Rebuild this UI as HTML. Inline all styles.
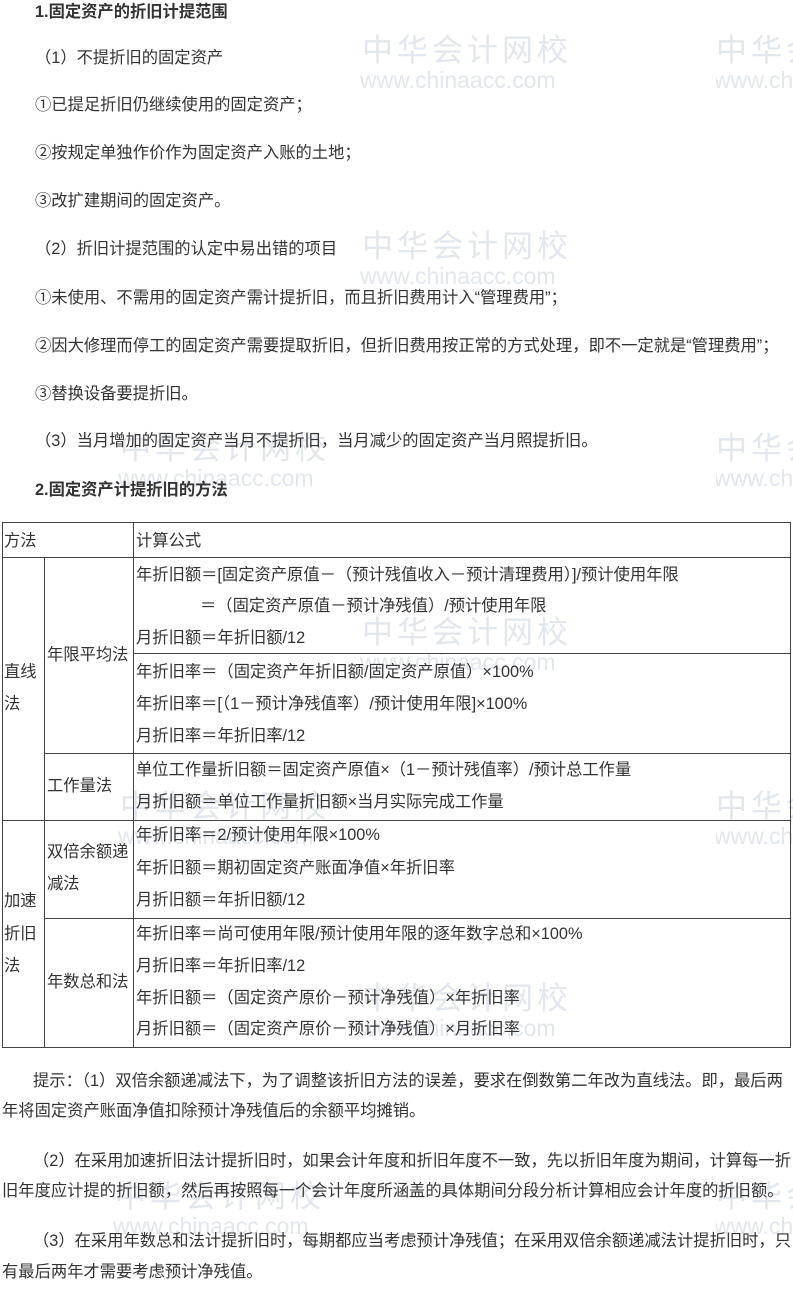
<!DOCTYPE html><html><head><meta charset="utf-8"><style>
html,body{margin:0;width:793px;height:1300px;overflow:hidden}
body{background:#fff;font-family:"Liberation Sans","Noto Sans CJK SC",sans-serif;color:#333;font-size:16.3px}
#w{position:relative;width:793px;height:1300px;overflow:hidden}
.t{position:absolute;white-space:nowrap;line-height:18px;z-index:1}
.b{font-weight:bold}
.wm{position:absolute;color:#e2e6ee;white-space:nowrap;z-index:0}
.wm .c{font-size:31px;letter-spacing:4px;line-height:34px}
.wm .u{font-size:23px;line-height:24px;margin-left:-2px}
.wr{width:77px;overflow:hidden}
.h{position:absolute;background:#444;height:1px}
.v{position:absolute;background:#444;width:1px}
</style></head><body><div id="w">
<div class="wm" style="left:362px;top:34px"><div class="c">中华会计网校</div><div class="u">www.chinaacc.com</div></div>
<div class="wm" style="left:362px;top:230px"><div class="c">中华会计网校</div><div class="u">www.chinaacc.com</div></div>
<div class="wm" style="left:362px;top:616px"><div class="c">中华会计网校</div><div class="u">www.chinaacc.com</div></div>
<div class="wm" style="left:362px;top:982px"><div class="c">中华会计网校</div><div class="u">www.chinaacc.com</div></div>
<div class="wm" style="left:120px;top:432px"><div class="c">中华会计网校</div><div class="u">www.chinaacc.com</div></div>
<div class="wm" style="left:120px;top:790px"><div class="c">中华会计网校</div><div class="u">www.chinaacc.com</div></div>
<div class="wm" style="left:115px;top:1180px"><div class="c">中华会计网校</div><div class="u">www.chinaacc.com</div></div>
<div class="wm wr" style="left:716px;top:34px"><div class="c">中华会计网校</div><div class="u">www.chinaacc.com</div></div>
<div class="wm wr" style="left:716px;top:432px"><div class="c">中华会计网校</div><div class="u">www.chinaacc.com</div></div>
<div class="wm wr" style="left:716px;top:790px"><div class="c">中华会计网校</div><div class="u">www.chinaacc.com</div></div>
<div class="wm wr" style="left:716px;top:1180px"><div class="c">中华会计网校</div><div class="u">www.chinaacc.com</div></div>

<div class="t b" style="left:35px;top:3px">1.固定资产的折旧计提范围</div>
<div class="t" style="left:35px;top:49px">（1）不提折旧的固定资产</div>
<div class="t" style="left:35px;top:96px">①已提足折旧仍继续使用的固定资产；</div>
<div class="t" style="left:35px;top:144px">②按规定单独作价作为固定资产入账的土地；</div>
<div class="t" style="left:35px;top:192px">③改扩建期间的固定资产。</div>
<div class="t" style="left:35px;top:240px">（2）折旧计提范围的认定中易出错的项目</div>
<div class="t" style="left:35px;top:289px">①未使用、不需用的固定资产需计提折旧，而且折旧费用计入“管理费用”；</div>
<div class="t" style="left:35px;top:337px">②因大修理而停工的固定资产需要提取折旧，但折旧费用按正常的方式处理，即不一定就是“管理费用”；</div>
<div class="t" style="left:35px;top:385px">③替换设备要提折旧。</div>
<div class="t" style="left:35px;top:432px">（3）当月增加的固定资产当月不提折旧，当月减少的固定资产当月照提折旧。</div>
<div class="t b" style="left:35px;top:481px">2.固定资产计提折旧的方法</div>

<div class="h" style="left:2px;width:789px;top:522px"></div>
<div class="h" style="left:2px;width:789px;top:557px"></div>
<div class="h" style="left:133px;width:658px;top:653px"></div>
<div class="h" style="left:44px;width:747px;top:753px"></div>
<div class="h" style="left:2px;width:789px;top:820px"></div>
<div class="h" style="left:44px;width:747px;top:918px"></div>
<div class="h" style="left:2px;width:789px;top:1047px"></div>
<div class="v" style="left:2px;top:522px;height:526px"></div>
<div class="v" style="left:44px;top:557px;height:491px"></div>
<div class="v" style="left:133px;top:522px;height:526px"></div>
<div class="v" style="left:790px;top:522px;height:526px"></div>

<div class="t" style="left:4px;top:532px">方法</div>
<div class="t" style="left:136px;top:532px">计算公式</div>
<div class="t" style="left:4px;top:663px">直线</div>
<div class="t" style="left:4px;top:695px">法</div>
<div class="t" style="left:47px;top:646px">年限平均法</div>
<div class="t" style="left:47px;top:777px">工作量法</div>
<div class="t" style="left:47px;top:843px">双倍余额递</div>
<div class="t" style="left:47px;top:875px">减法</div>
<div class="t" style="left:47px;top:973px">年数总和法</div>
<div class="t" style="left:4px;top:892px">加速</div>
<div class="t" style="left:4px;top:925px">折旧</div>
<div class="t" style="left:4px;top:957px">法</div>

<div class="t" style="left:136px;top:566px">年折旧额＝[固定资产原值－（预计残值收入－预计清理费用）]/预计使用年限</div>
<div class="t" style="left:200px;top:597px">＝（固定资产原值－预计净残值）/预计使用年限</div>
<div class="t" style="left:136px;top:629px">月折旧额＝年折旧额/12</div>
<div class="t" style="left:136px;top:663px">年折旧率＝（固定资产年折旧额/固定资产原值）×100%</div>
<div class="t" style="left:136px;top:695px">年折旧率＝[（1－预计净残值率）/预计使用年限]×100%</div>
<div class="t" style="left:136px;top:727px">月折旧率＝年折旧率/12</div>
<div class="t" style="left:136px;top:761px">单位工作量折旧额＝固定资产原值×（1－预计残值率）/预计总工作量</div>
<div class="t" style="left:136px;top:793px">月折旧额＝单位工作量折旧额×当月实际完成工作量</div>
<div class="t" style="left:136px;top:826px">年折旧率＝2/预计使用年限×100%</div>
<div class="t" style="left:136px;top:859px">年折旧额＝期初固定资产账面净值×年折旧率</div>
<div class="t" style="left:136px;top:891px">月折旧额＝年折旧额/12</div>
<div class="t" style="left:136px;top:925px">年折旧率＝尚可使用年限/预计使用年限的逐年数字总和×100%</div>
<div class="t" style="left:136px;top:957px">月折旧率＝年折旧率/12</div>
<div class="t" style="left:136px;top:989px">年折旧额＝（固定资产原价－预计净残值）×年折旧率</div>
<div class="t" style="left:136px;top:1020px">月折旧额＝（固定资产原价－预计净残值）×月折旧率</div>

<div class="t" style="left:33px;top:1072px">提示：（1）双倍余额递减法下，为了调整该折旧方法的误差，要求在倒数第二年改为直线法。即，最后两</div>
<div class="t" style="left:2px;top:1102px">年将固定资产账面净值扣除预计净残值后的余额平均摊销。</div>
<div class="t" style="left:33px;top:1152px">（2）在采用加速折旧法计提折旧时，如果会计年度和折旧年度不一致，先以折旧年度为期间，计算每一折</div>
<div class="t" style="left:2px;top:1182px">旧年度应计提的折旧额，然后再按照每一个会计年度所涵盖的具体期间分段分析计算相应会计年度的折旧额。</div>
<div class="t" style="left:33px;top:1232px">（3）在采用年数总和法计提折旧时，每期都应当考虑预计净残值；在采用双倍余额递减法计提折旧时，只</div>
<div class="t" style="left:2px;top:1263px">有最后两年才需要考虑预计净残值。</div>
</div></body></html>
